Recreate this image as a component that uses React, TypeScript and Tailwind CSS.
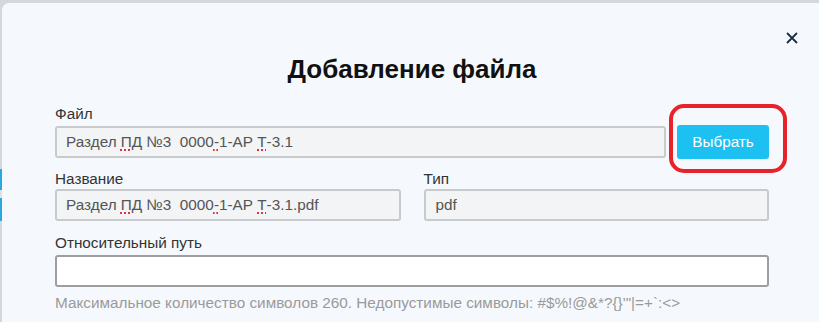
import React from "react";

const sp = "underline decoration-dotted decoration-[#e3343a] decoration-2 underline-offset-[3px]";

function FileName({ ext }: { ext?: string }) {
  return (
    <span className="whitespace-pre">
      Раздел <span className={sp}>ПД</span> №3  0000<span className={sp}>-</span>1-АР <span className={sp}>Т</span>-3.1{ext ?? ""}
    </span>
  );
}

export default function App() {
  return (
    <div
      className="relative w-[819px] h-[322px] overflow-hidden bg-[#d4d8dc] pt-[3px] pl-[2px] flex"
      style={{ fontFamily: '"Liberation Sans", Arial, sans-serif' }}
    >
      {/* background page stripe peeking at left edge */}
      <div className="absolute left-0 top-[169px] w-[2px] h-[21px] bg-[#2aa8dc]" />
      <div className="absolute left-0 top-[190px] w-[2px] h-[8px] bg-[#dde1e5]" />
      <div className="absolute left-0 top-[198px] w-[2px] h-[23px] bg-[#2aa8dc]" />

      <div className="relative flex-1 bg-[#f5f9fd] rounded-tl-[7px] pt-[51px] pl-[53px]">
        <button className="absolute left-[782px] top-[27px] w-[16px] h-[16px] flex items-center justify-center">
          <svg width="12" height="12" viewBox="0 0 12 12" fill="none">
            <path d="M1 1L11 11M11 1L1 11" stroke="#1b2d42" strokeWidth="1.8" />
          </svg>
        </button>

        <div className="w-[714px] flex flex-col">
          <h1 className="text-center text-[26px] leading-[30px] font-bold text-[#111]">Добавление файла</h1>

          <label className="mt-[21px] text-[15.3px] leading-[18px] text-[#333]">Файл</label>
          <div className="mt-[2px] flex items-center gap-[11px] relative">
            <div className="flex-1 h-[32px] border-2 border-[#c9cacc] rounded-[3px] bg-[#f2f4f6] pl-[9px] flex items-center text-[15.3px] text-[#555]">
              <FileName />
            </div>
            <div className="w-[92px] h-[34px] rounded-[3px] bg-[#1dc1f1] text-white text-[15.3px] flex items-center justify-center">
              Выбрать
            </div>
            <div className="absolute left-[614px] top-[-21px] w-[118px] h-[69px] border-[4px] border-[#e8222b] rounded-[15px] pointer-events-none" />
          </div>

          <div className="mt-[11px] grid grid-cols-2 gap-x-[23px]">
            <div className="flex flex-col">
              <label className="text-[15.3px] leading-[18px] text-[#333]">Название</label>
              <div className="mt-[1px] h-[32px] border-2 border-[#c9cacc] rounded-[3px] bg-[#f2f4f6] pl-[9px] flex items-center text-[15.3px] text-[#555]">
                <FileName ext=".pdf" />
              </div>
            </div>
            <div className="flex flex-col">
              <label className="text-[15.3px] leading-[18px] text-[#333]">Тип</label>
              <div className="mt-[1px] h-[32px] border-2 border-[#c9cacc] rounded-[3px] bg-[#f2f4f6] pl-[10px] flex items-center text-[15.3px] text-[#555]">
                pdf
              </div>
            </div>
          </div>

          <label className="mt-[13px] text-[15.3px] leading-[18px] text-[#333]">Относительный путь</label>
          <div className="mt-[3px] h-[32px] border-2 border-[#9e9e9e] rounded-[3px] bg-white" />

          <p className="mt-[7px] text-[15.3px] leading-[18px] text-[#9a9a9a] whitespace-nowrap">
            Максимальное количество символов 260. Недопустимые символы: #$%!@&amp;*?{"{}"}'"|=+`:&lt;&gt;
          </p>
        </div>
      </div>
    </div>
  );
}
